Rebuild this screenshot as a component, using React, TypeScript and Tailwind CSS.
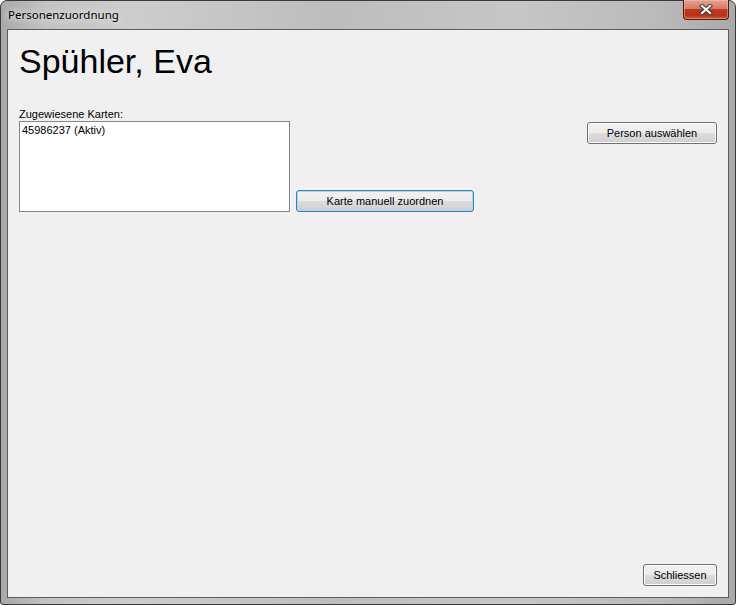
import React from 'react';

const WinButton: React.FC<{ label: string; className?: string; focused?: boolean }> = ({ label, className = '', focused }) => (
    <button
        className={
            'h-[22px] rounded-[3px] border text-[11px] leading-none text-black flex items-center justify-center bg-[linear-gradient(to_bottom,#f2f2f2_0%,#ebebeb_50%,#dddddd_50%,#cfcfcf_100%)] ' +
            (focused
                ? 'border-[#3c7fb1] shadow-[inset_0_0_0_1px_#a9d8f5] '
                : 'border-[#707070] shadow-[inset_0_0_0_1px_#fbfbfb] ') +
            className
        }
    >
        {label}
    </button>
);

const CloseButton: React.FC = () => (
    <div className="-mt-px ml-auto h-[20px] w-[46px] rounded-b-[4px] border border-t-0 border-[#4a1a12] bg-[linear-gradient(to_bottom,#e3a595_0%,#d77a63_45%,#c0391f_50%,#b7321a_80%,#d9563a_100%)] shadow-[inset_0_0_0_1px_rgba(255,200,180,0.45)] flex items-center justify-center">
        <svg width="14" height="11" viewBox="0 0 14 11">
            <path d="M3 2 L11 9 M11 2 L3 9" stroke="#3b3b3b" strokeWidth="4.2" strokeLinecap="square" />
            <path d="M3 2 L11 9 M11 2 L3 9" stroke="#ffffff" strokeWidth="2.2" strokeLinecap="square" />
        </svg>
    </div>
);

const App: React.FC = () => {
    return (
        <div className="w-[736px] h-[605px] flex flex-col rounded-t-[7px] rounded-b-[3px] border border-[#3a3a3a] px-[6px] pb-[6px] bg-[linear-gradient(to_right,#a8a8a8_0%,#c2c2c2_6%,#cdcdcd_18%,#bdbdbd_45%,#c6c6c6_70%,#bababa_90%,#a9a9a9_100%)]">
            {/* title bar */}
            <div className="h-[28px] flex items-start">
                <span className="pt-[6px] pl-[1px] text-[11.5px] leading-[16px] text-black [font-family:'Noto_Sans',sans-serif] [text-shadow:0_0_6px_#e8e8e8,0_0_10px_#e8e8e8]">
                    Personenzuordnung
                </span>
                <CloseButton />
            </div>

            {/* client area */}
            <div className="flex-1 flex flex-col border border-[#5c5c5c] bg-[#f0f0f0] px-[11px] [font-family:'Liberation_Sans',Arial,sans-serif]">
                <h1 className="mt-[14px] text-[34px] leading-[34px] text-black">Spühler, Eva</h1>

                <div className="mt-[29px] flex items-start">
                    <div className="w-[271px] flex flex-col">
                        <span className="text-[11px] leading-[14px] text-black">Zugewiesene Karten:</span>
                        <div className="h-[91px] border border-[#828790] bg-white pl-[2px] pt-[2px] text-[11px] leading-[13px] text-black">
                            45986237 (Aktiv)
                        </div>
                    </div>
                    <WinButton label="Karte manuell zuordnen" focused className="self-end ml-[6px] w-[178px]" />
                    <WinButton label="Person auswählen" className="ml-auto mt-[15px] w-[130px]" />
                </div>

                <WinButton label="Schliessen" className="mt-auto mb-[11px] self-end w-[74px]" />
            </div>
        </div>
    );
};

export default App;
